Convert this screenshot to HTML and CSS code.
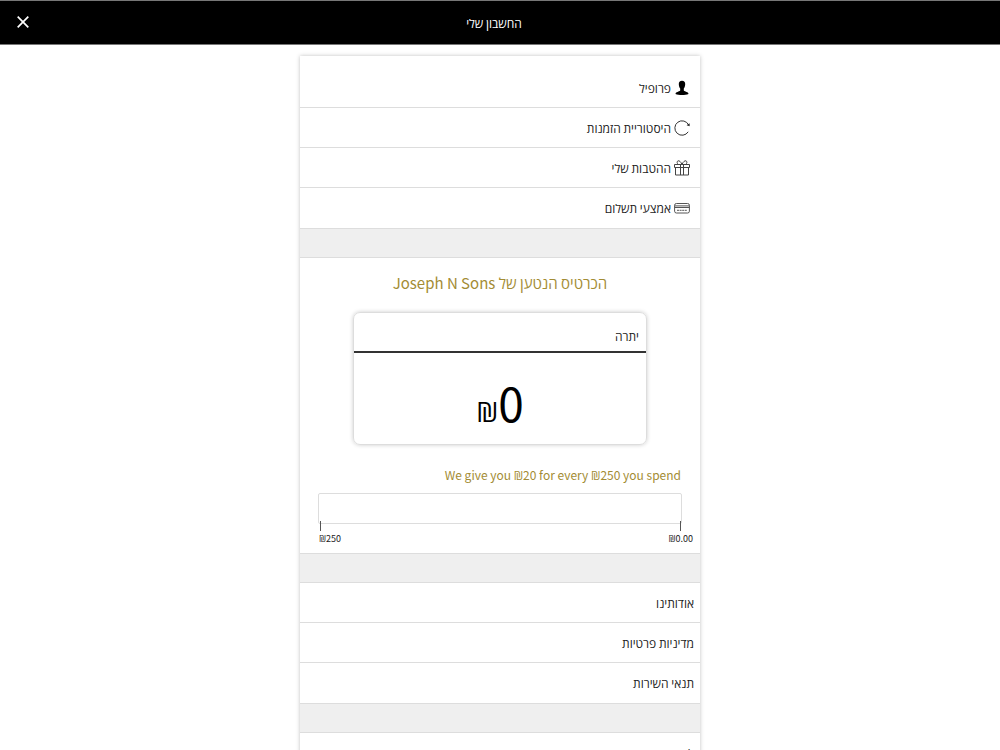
FILE: index.html
```html
<!DOCTYPE html>
<html lang="he" dir="rtl">
<head>
    <meta charset="UTF-8">
    <meta name="viewport" content="width=device-width, initial-scale=1.0">
    <title>החשבון שלי</title>
    <link rel="stylesheet" href="styles.css">
</head>
<body>
    <header class="top-bar">
        <h1>החשבון שלי</h1>
        <button type="button" class="close-btn" aria-label="סגור">
            <svg width="12" height="12" viewBox="0 0 12 12" fill="none" stroke="#fff" stroke-width="1.7">
                <path d="M.7.7l10.6 10.6M11.3.7L.7 11.3"/>
            </svg>
        </button>
    </header>

    <main class="account">
        <nav class="menu menu-main">
            <a href="#profile">
                <svg class="icon" viewBox="0 0 16 16">
                    <path d="M8 .8c2.200 0 3.300 1.300 3.200 3.500-.1 2-.6 3.300-1.400 4.200v1.800c0 .6.800 1 2.200 1.400 1.700.5 2.400 1 2.500 2.200-1.700.8-4 1.100-6.500 1.100s-4.800-.3-6.500-1.100c.1-1.200.8-1.700 2.500-2.200 1.400-.4 2.200-.8 2.200-1.400V8.500c-.8-.9-1.300-2.200-1.400-4.200C4.700 2.100 5.800.8 8 .8z"/>
                </svg>
                <span>פרופיל</span>
            </a>
            <a href="#orders">
                <svg class="icon" viewBox="0 0 16 16" fill="none" stroke="#333" stroke-width="1">
                    <path d="M14.200 11.800A7.200 7.200 0 1 1 14.600 5"/>
                    <path d="M15.600 3.200v3l-3-1z" fill="#222" stroke="none"/>
                </svg>
                <span>היסטוריית הזמנות</span>
            </a>
            <a href="#benefits">
                <svg class="icon" viewBox="0 0 16 16" fill="none" stroke="#444" stroke-width="1">
                    <path d="M.5 4.500h15v3H.5zM1.500 7.500v7.500h13V7.500M6.500 4.500V15M9.500 4.500V15"/>
                    <path d="M8 4.300C6.800 1.800 5.300.5 4.100.8 2.700 1.200 2.800 3.500 4.300 4.300M8 4.300C9.200 1.800 10.700.5 11.900.8c1.400.4 1.300 2.700-.2 3.500"/>
                </svg>
                <span>ההטבות שלי</span>
            </a>
            <a href="#payment">
                <svg class="icon" viewBox="0 0 16 16" fill="none" stroke="#555" stroke-width="1">
                    <rect x=".6" y="3.500" width="14.800" height="9.500" rx="1.800"/>
                    <path d="M.6 5.900h14.800M.6 7.500h14.800"/>
                    <path d="M3 10.300h10" stroke-dasharray="2 .6"/>
                </svg>
                <span>אמצעי תשלום</span>
            </a>
        </nav>

        <div class="spacer"></div>

        <section class="loaded-card">
            <h2>הכרטיס הנטען של Joseph N Sons</h2>
            <div class="balance">
                <div class="balance-title">יתרה</div>
                <div class="balance-amount" dir="ltr"><span>₪</span>0</div>
            </div>
            <div class="progress">
                <p dir="ltr">We give you ₪20 for every ₪250 you spend</p>
                <div class="progress-bar"></div>
                <div class="progress-scale">
                    <span dir="ltr">₪0.00</span>
                    <span dir="ltr">₪250</span>
                </div>
            </div>
        </section>

        <div class="spacer"></div>

        <nav class="menu">
            <a href="#about">אודותינו</a>
            <a href="#privacy">מדיניות פרטיות</a>
            <a href="#terms">תנאי השירות</a>
        </nav>

        <div class="spacer"></div>

        <nav class="menu">
            <a href="#logout">להתנתק</a>
        </nav>
    </main>
</body>
</html>
```
FILE: styles.css
```css
* {
    box-sizing: border-box;
}
body {
    margin: 0;
    font-family: "Noto Sans CJK JP", "Open Sans", sans-serif;
    font-size: 12px;
    line-height: 20px;
    color: #222;
    background-color: #fff;
}
h1, h2, p {
    margin: 0;
    font-weight: normal;
}

.top-bar {
    position: relative;
    display: flex;
    justify-content: center;
    align-items: center;
    height: 45px;
    padding: 0 24px 0 12px;
    background-color: #000;
    color: #fff;
    border-top: 1px solid #777;
    border-bottom: 1px solid #777;
}
.top-bar h1 {
    font-size: 12px;
}
.close-btn {
    position: absolute;
    left: 12px;
    top: 10px;
    display: flex;
    padding: 5px;
    background: none;
    border: none;
    cursor: pointer;
}

.account {
    max-width: 400px;
    margin: 11px auto 0;
    box-shadow: 0 0 4px rgba(0, 0, 0, 0.25);
}

.menu a {
    display: flex;
    align-items: center;
    gap: 3px;
    height: 40px;
    padding: 0 6px;
    color: #222;
    text-decoration: none;
    border-bottom: 1px solid #ddd;
}
.menu a:last-child {
    border-bottom-color: transparent;
}
.menu-main {
    padding-top: 12px;
}
.menu-main a {
    padding: 0 10px;
}
.icon {
    width: 16px;
    height: 16px;
}

.spacer {
    height: 30px;
    background-color: #efefef;
    border-top: 1px solid #ddd;
    border-bottom: 1px solid #ddd;
}

.loaded-card {
    padding: 13px 18px 6px;
}
.loaded-card h2 {
    font-size: 15px;
    line-height: 24px;
    text-align: center;
    color: #a38c34;
}
.balance {
    max-width: 294px;
    height: 133px;
    margin: 17px auto 0;
    border: 1px solid #ddd;
    border-radius: 7px;
    box-shadow: 0 0 4px rgba(0, 0, 0, 0.2);
}
.balance-title {
    height: 40px;
    padding: 13px 7px 0;
    border-bottom: 2px solid #333;
}
.balance-amount {
    padding-top: 13px;
    font-size: 46px;
    line-height: 72px;
    text-align: center;
    color: #000;
}
.balance-amount span {
    font-family: "Open Sans", sans-serif;
    font-size: 28px;
}

.progress {
    margin-top: 20px;
}
.progress p {
    padding-right: 1px;
    text-align: right;
    color: #a38c34;
}
.progress-bar {
    height: 31px;
    margin-top: 8px;
    border: 1px solid #ddd;
    border-radius: 2px;
}
.progress-scale {
    display: flex;
    justify-content: space-between;
    margin: -3px -11px 0 1px;
    font-size: 9px;
    line-height: 16px;
}
.progress-scale span::before {
    content: "";
    display: block;
    width: 1px;
    height: 10px;
    margin: 0 1px;
    background-color: #555;
}
.progress-scale span:first-child::before {
    margin-left: 12px;
}
```
